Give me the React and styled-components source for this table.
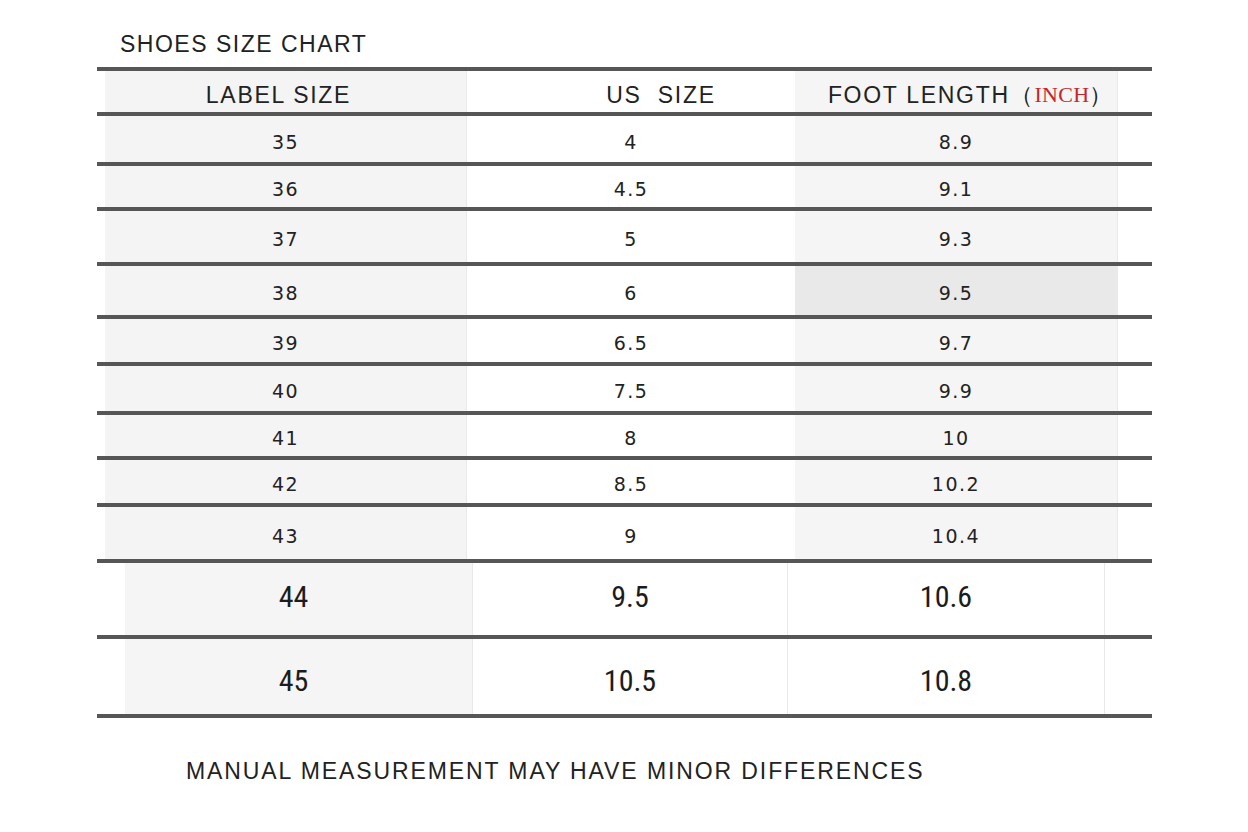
import React from 'react';
import styled, { createGlobalStyle } from 'styled-components';

const GlobalStyle = createGlobalStyle`
  html, body {
    margin: 0;
    padding: 0;
    background: #ffffff;
  }
`;

const Page = styled.div`
  width: 1248px;
  height: 832px;
  overflow: hidden;
  background: #fff;
  color: #222;
  font-family: "Liberation Sans", Arial, sans-serif;
`;

const Title = styled.h1`
  margin: 0;
  padding: 31px 0 0 120px;
  height: 36px;
  font-size: 23px;
  font-weight: 400;
  letter-spacing: 1.5px;
  line-height: 26px;
  color: #222;
`;

const Chart = styled.div`
  margin-left: 97px;
  width: 1055px;
`;

const Row = styled.div`
  display: grid;
  grid-template-columns: ${p => p.$cols};
  height: ${p => p.$h}px;
  border-top: 4px solid #565656;
  box-sizing: border-box;
`;

const EndLine = styled.div`
  height: 4px;
  background: #565656;
`;

// $shift moves the centred text sideways (px of padding, + right / - left)
const Cell = styled.div`
  display: flex;
  align-items: center;
  justify-content: center;
  background: ${p => p.$bg || 'transparent'};
  border-right: ${p => (p.$edge ? '1px solid #e9e9e9' : 'none')};
  padding-left: ${p => Math.max(p.$shift || 0, 0)}px;
  padding-right: ${p => Math.max(-(p.$shift || 0), 0)}px;
  padding-top: 5px;
  font-family: "DejaVu Sans", Verdana, sans-serif;
  font-size: 19px;
  letter-spacing: 1.5px;
  color: #222;
  box-sizing: border-box;
`;

const HeadCell = styled(Cell)`
  font-family: "Liberation Sans", Arial, sans-serif;
  font-size: 23px;
  letter-spacing: 1.7px;
  padding-top: 7px;
  white-space: pre;
`;

const BigCell = styled(Cell)`
  font-family: "Liberation Sans Narrow", "Roboto Condensed", "Liberation Sans", sans-serif;
  font-size: 30px;
  letter-spacing: 0;
  font-weight: 400;
  padding-top: ${p => (p.$low ? 8 : 0)}px;
  padding-bottom: ${p => (p.$low ? 0 : 6)}px;
  color: #1c1c1c;
`;

const Unit = styled.span`
  font-family: "Liberation Serif", "Times New Roman", serif;
  color: #c4262c;
  letter-spacing: 0.3px;
  font-size: 22px;
`;

const Footer = styled.p`
  margin: 40px 0 0 186px;
  font-size: 23px;
  letter-spacing: 1.9px;
  color: #222;
`;

const COLS = '8px 362px 328px 323px 34px';
const BIG_COLS = '28px 348px 315px 317px 47px';

const rows = [
  ['35', '4', '8.9', 50],
  ['36', '4.5', '9.1', 45],
  ['37', '5', '9.3', 55],
  ['38', '6', '9.5', 53, true],
  ['39', '6.5', '9.7', 47],
  ['40', '7.5', '9.9', 49],
  ['41', '8', '10', 45],
  ['42', '8.5', '10.2', 47],
  ['43', '9', '10.4', 56],
];

const bigRows = [
  ['44', '9.5', '10.6', 76, false],
  ['45', '10.5', '10.8', 79, true],
];

export default function App() {
  return (
    <Page>
      <GlobalStyle />
      <Title>SHOES SIZE CHART</Title>
      <Chart>
        <Row $cols={COLS} $h={45}>
          <Cell />
          <HeadCell $bg="#f4f4f4" $edge $shift={-14}>LABEL SIZE</HeadCell>
          <HeadCell $shift={60}>{'US  SIZE'}</HeadCell>
          <HeadCell $bg="#f5f5f5" $edge $shift={30}>
            FOOT LENGTH（<Unit>INCH</Unit>）
          </HeadCell>
          <Cell />
        </Row>
        {rows.map(([label, us, foot, h, hl]) => (
          <Row key={label} $cols={COLS} $h={h}>
            <Cell />
            <Cell $bg="#f4f4f4" $edge>{label}</Cell>
            <Cell>{us}</Cell>
            <Cell $bg={hl ? '#e9e9e9' : '#f5f5f5'} $edge>{foot}</Cell>
            <Cell />
          </Row>
        ))}
        {bigRows.map(([label, us, foot, h, low]) => (
          <Row key={label} $cols={BIG_COLS} $h={h}>
            <Cell />
            <BigCell $bg="#f5f5f5" $edge $low={low} $shift={-10}>{label}</BigCell>
            <BigCell $edge $low={low}>{us}</BigCell>
            <BigCell $edge $low={low}>{foot}</BigCell>
            <Cell />
          </Row>
        ))}
        <EndLine />
      </Chart>
      <Footer>MANUAL MEASUREMENT MAY HAVE MINOR DIFFERENCES</Footer>
    </Page>
  );
}
